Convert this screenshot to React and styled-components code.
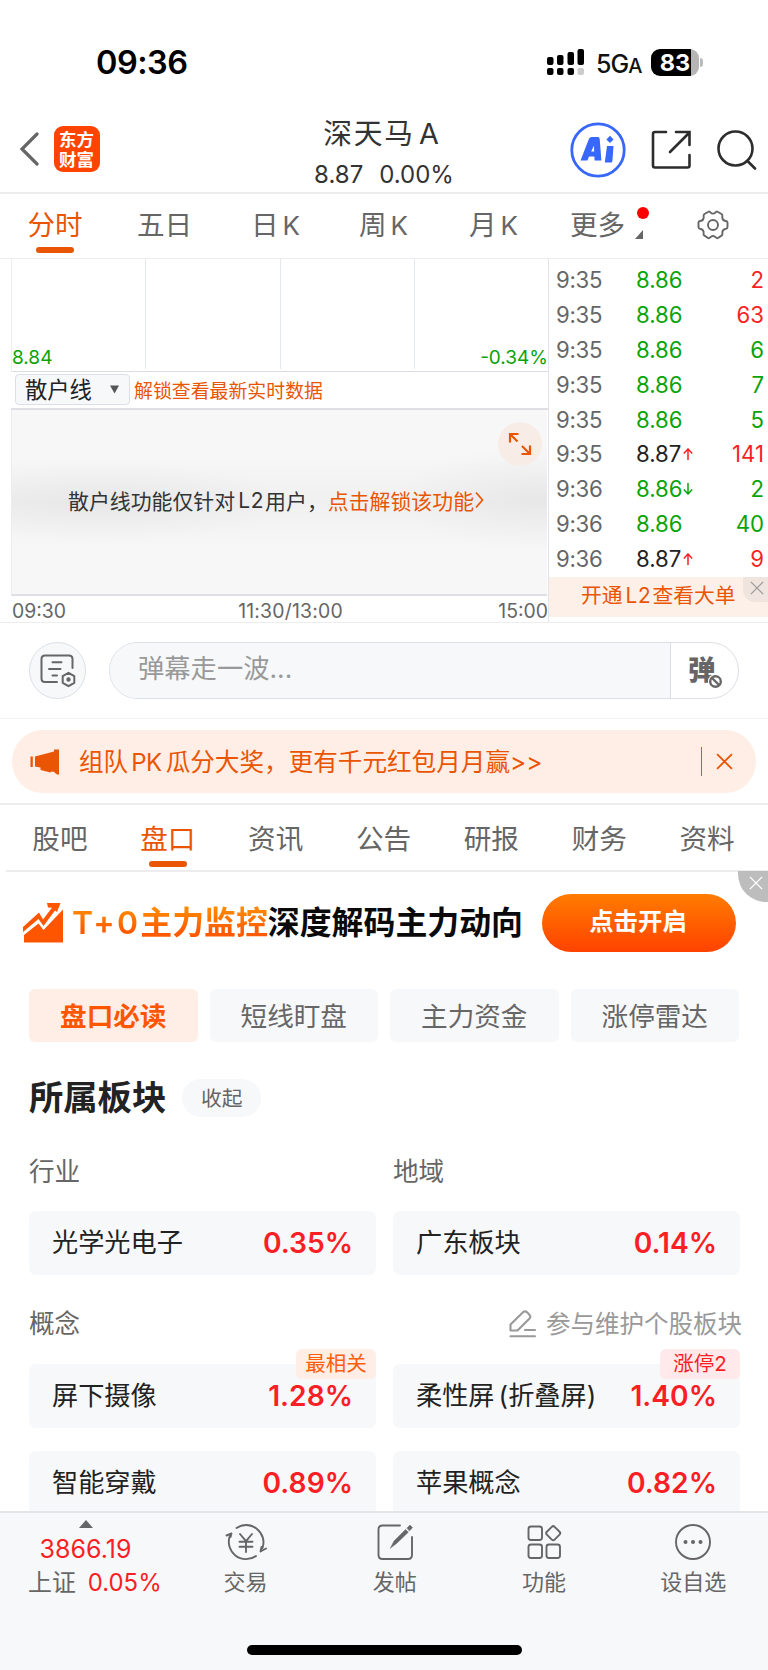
import React from "react";
import styled, { createGlobalStyle, css } from "styled-components";

const orange = "#ea5504";
const red = "#f91f24";
const green = "#0aa30a";
const gray = "#666";
const line = "#ededf0";

export default function App() {
  return (
    <>
      <GlobalStyle />
      <Screen>
        <StatusBar />
        <Header />
        <PeriodTabs />
        <Market>
          <Chart />
          <Ticks />
        </Market>
        <Danmu />
        <Notice />
        <SectionTabs />
        <Promo />
        <Filters />
        <Blocks />
        <BottomNav />
      </Screen>
    </>
  );
}

function StatusBar() {
  return (
    <Status>
      <Clock>09:36</Clock>
      <StatusRight>
        <svg width="38" height="27" viewBox="0 0 38 27">
          <rect x="0" y="8" width="6.5" height="8" rx="2" />
          <rect x="10" y="6" width="6.5" height="10" rx="2" />
          <rect x="20.5" y="3" width="6.5" height="13" rx="2" />
          <rect x="30.5" y="0" width="6.5" height="16" rx="2" />
          <rect x="0" y="19" width="6.5" height="7" rx="2" />
          <rect x="10" y="19" width="6.5" height="7" rx="2" />
          <rect x="20.5" y="19" width="6.5" height="7" rx="2" />
          <rect x="30.5" y="19" width="6.5" height="7" rx="2" fill="#ccc" />
        </svg>
        <Network>
          5G<small>A</small>
        </Network>
        <Battery>83</Battery>
        <BatteryTip />
      </StatusRight>
    </Status>
  );
}

function Header() {
  return (
    <Top>
      <TopSide>
        <svg width="20" height="34" viewBox="0 0 20 34" fill="none" stroke="#666" strokeWidth="3.2">
          <path d="M18 2 L3 17 L18 32" strokeLinecap="round" />
        </svg>
        <Logo>东方财富</Logo>
      </TopSide>
      <TopCenter>
        <StockName>
          深天马<i>A</i>
        </StockName>
        <StockPrice>
          <span>8.87</span>
          <span>0.00%</span>
        </StockPrice>
      </TopCenter>
      <TopActions>
        <svg width="56" height="56" viewBox="0 0 56 56">
          <circle cx="28" cy="28" r="26.2" fill="none" stroke="#3767fb" strokeWidth="2.8" />
          <path
            d="M21.5 15 H28 Q29.5 15 29.7 17 L31.4 38.5 H24.6 L24.4 34.5 H19 L17.4 38.5 H10.5 L19 16.8 Q19.8 15 21.5 15 Z M24 23.5 L21.2 29.6 H24.2 Z"
            fill="#3767fb"
            fillRule="evenodd"
          />
          <path d="M37 24 H43.5 L42.4 39 Q42.2 40.5 41 40.5 H34.8 Z" fill="#3767fb" />
          <path d="M40 13.8 L43.6 17.4 L40 21 L36.4 17.4 Z" fill="#3767fb" />
        </svg>
        <svg width="40" height="40" viewBox="0 0 40 40" fill="none" stroke="#2d2d2d" strokeWidth="2.6" strokeLinecap="round">
          <path d="M15 2 H4 Q2 2 2 4 V35.5 Q2 37.5 4 37.5 H36.5 Q38.5 37.5 38.5 35.5 V25" />
          <path d="M25 2 H38.5 V15 M38 3 L19 22" />
        </svg>
        <svg width="40" height="40" viewBox="0 0 40 40" fill="none" stroke="#2d2d2d" strokeWidth="2.6" strokeLinecap="round">
          <circle cx="18.5" cy="18.5" r="17" />
          <path d="M30.5 31 L38 38.5" />
        </svg>
      </TopActions>
    </Top>
  );
}

const periods = [
  { text: "分时", width: 110, active: true },
  { text: "五日", width: 109 },
  { text: "日", k: true, width: 113 },
  { text: "周", k: true, width: 103 },
  { text: "月", k: true, width: 117 },
];

function PeriodTabs() {
  return (
    <Periods>
      {periods.map((p) => (
        <Period key={p.text} $w={p.width}>
          <TabText $active={p.active}>
            {p.text}
            {p.k && <i>K</i>}
          </TabText>
        </Period>
      ))}
      <MoreTab>
        更多
        <MoreDot />
        <MoreCorner />
      </MoreTab>
      <svg width="32" height="30" viewBox="0 0 32 30" fill="none" stroke="#666" strokeWidth="1.9" strokeLinejoin="round">
        <path d="M11 2 Q12.5 1 13.3 2.3 Q16 5 18.7 2.3 Q19.5 1 21 2 L24.5 4 Q25.7 4.7 25.3 6 Q24.8 10.4 28.8 11 Q30.5 11.3 30.5 12.6 V17 Q30.5 18.4 29 18.7 Q24.8 19.4 25.4 23.8 Q25.6 25 24.5 25.6 L21.4 27.7 Q20 28.7 19 27.5 Q16 24.6 13 27.5 Q12 28.7 10.6 27.7 L7.5 25.6 Q6.4 25 6.6 23.8 Q7.2 19.4 3 18.7 Q1.5 18.4 1.5 17 V12.6 Q1.5 11.3 3.2 11 Q7.2 10.4 6.7 6 Q6.3 4.7 7.5 4 Z" />
        <circle cx="16" cy="15" r="5" />
      </svg>
    </Periods>
  );
}

function Chart() {
  return (
    <ChartCol>
      <Grid>
        <GridCell>
          <span>8.84</span>
        </GridCell>
        <GridCell />
        <GridCell />
        <GridCell $end>
          <span>-0.34%</span>
        </GridCell>
      </Grid>
      <IndicatorBar>
        <Select>
          散户线
          <svg width="9" height="9" viewBox="0 0 9 9">
            <path d="M0 0.5 H9 L4.5 8.5 Z" fill="#555" />
          </svg>
        </Select>
        <UnlockHint>解锁查看最新实时数据</UnlockHint>
      </IndicatorBar>
      <Locked>
        <LockedText>
          散户线功能仅针对<i>L2</i>用户，<b>点击解锁该功能</b>
          <svg width="9" height="18" viewBox="0 0 9 18" fill="none" stroke={orange} strokeWidth="1.7">
            <path d="M1 1.5 L7.5 9 L1 16.5" />
          </svg>
        </LockedText>
        <Expand>
          <svg width="24" height="24" viewBox="0 0 24 24" fill="none" stroke={orange} strokeWidth="2.2">
            <path d="M2 10.5 V2 H10.5 M2.5 2.5 L9.5 9.5 M22 13.5 V22 H13.5 M21.5 21.5 L14 14" />
          </svg>
        </Expand>
      </Locked>
      <Axis>
        <span>09:30</span>
        <span>11:30/13:00</span>
        <span>15:00</span>
      </Axis>
    </ChartCol>
  );
}

const ticks = [
  ["9:35", "8.86", "", "2", "up"],
  ["9:35", "8.86", "", "63", "up"],
  ["9:35", "8.86", "", "6", "down"],
  ["9:35", "8.86", "", "7", "down"],
  ["9:35", "8.86", "", "5", "down"],
  ["9:35", "8.87", "up", "141", "up"],
  ["9:36", "8.86", "down", "2", "down"],
  ["9:36", "8.86", "", "40", "down"],
  ["9:36", "8.87", "up", "9", "up"],
];

function Ticks() {
  return (
    <TickCol>
      <TickList>
        {ticks.map(([time, price, arrow, vol, side], i) => (
          <Tick key={i}>
            <TickTime>{time}</TickTime>
            <TickPrice $flat={price === "8.87"}>{price}</TickPrice>
            <TickArrow>
              {arrow && (
                <svg width="10" height="12" viewBox="0 0 10 12" fill="none" stroke={arrow === "up" ? red : green} strokeWidth="1.5">
                  <path d={arrow === "up" ? "M5 12 V1 M0.8 5.4 L5 1 L9.2 5.4" : "M5 0 V11 M0.8 6.6 L5 11 L9.2 6.6"} />
                </svg>
              )}
            </TickArrow>
            <TickVol $side={side}>{vol}</TickVol>
          </Tick>
        ))}
      </TickList>
      <L2Banner>
        开通<i>L2</i>查看大单
        <L2Close>
          <Cross size={14} color="#999" width={1.5} />
        </L2Close>
      </L2Banner>
    </TickCol>
  );
}

function Cross({ size, color, width }) {
  return (
    <svg width={size} height={size} viewBox="0 0 16 16" fill="none" stroke={color} strokeWidth={width}>
      <path d="M1 1 L15 15 M15 1 L1 15" />
    </svg>
  );
}

function Danmu() {
  return (
    <DanmuRow>
      <RoundButton>
        <svg width="36" height="34" viewBox="0 0 36 34" fill="none" stroke="#666" strokeWidth="2" strokeLinecap="round">
          <path d="M17 28 H5 Q1.5 28 1.5 24.5 V5 Q1.5 1.5 5 1.5 H29 Q32.5 1.5 32.5 5 V14" />
          <path d="M12.5 8.3 H21.5 M9 15 H20.5 M12.5 21.5 H17" />
          <path d="M28.5 18.8 L34.3 22.2 V28.8 L28.5 32.2 L22.7 28.8 V22.2 Z" strokeLinejoin="round" />
          <circle cx="28.5" cy="25.5" r="1.2" fill="#666" />
        </svg>
      </RoundButton>
      <InputBox>
        <Placeholder>弹幕走一波...</Placeholder>
        <DanmuToggle>
          弹
          <svg width="15" height="17" viewBox="0 0 15 17" fill="#fff" stroke="#666" strokeWidth="2.4">
            <circle cx="7.5" cy="8.5" r="7.5" stroke="none" />
            <circle cx="7.5" cy="8.5" r="5.3" />
            <path d="M4 5 L11 12" />
          </svg>
        </DanmuToggle>
      </InputBox>
    </DanmuRow>
  );
}

function Notice() {
  return (
    <NoticeWrap>
      <NoticeBar>
        <svg width="30" height="26" viewBox="0 0 30 26" fill={orange}>
          <path d="M0.5 7.5 H2.8 V18 H0.5 Z M5 7.5 L24 2.5 V0.5 H29 V25.5 H27 L24.5 23.5 V23 L21.5 22.5 L20.5 23.5 L10.5 21 V18.6 L5 17.5 Z" />
        </svg>
        <NoticeText>
          组队<i>PK</i>瓜分大奖，更有千元红包月月赢&gt;&gt;
        </NoticeText>
        <NoticeClose>
          <Cross size={17} color={orange} width={1.7} />
        </NoticeClose>
      </NoticeBar>
    </NoticeWrap>
  );
}

const sections = ["股吧", "盘口", "资讯", "公告", "研报", "财务", "资料"];

function SectionTabs() {
  return (
    <Sections>
      {sections.map((s) => (
        <Section key={s}>
          <TabText $active={s === "盘口"}>{s}</TabText>
        </Section>
      ))}
    </Sections>
  );
}

function Promo() {
  return (
    <PromoRow>
      <svg width="41" height="40" viewBox="0 0 41 40">
        <path d="M0 29 V24 L16 9.5 L20 16.5 L29 4.8 L25 4.5 L24 0 H37.5 L34 9 L32 7.5 L20.5 23 L15.5 16 Z" fill="#fe5500" />
        <path d="M1 32 L15.5 20.5 L20.5 27 L40 6.5 V39.5 H1 Z" fill="#fe5500" />
      </svg>
      <PromoText>
        <em>
          <b>T+0</b>主力监控
        </em>
        深度解码主力动向
      </PromoText>
      <PromoButton>点击开启</PromoButton>
      <PromoClose>
        <Cross size={14} color="#fff" width={1.6} />
      </PromoClose>
    </PromoRow>
  );
}

function Filters() {
  return (
    <FilterRow>
      <Chip $active>盘口必读</Chip>
      <Chip>短线盯盘</Chip>
      <Chip>主力资金</Chip>
      <Chip>涨停雷达</Chip>
    </FilterRow>
  );
}

function Block({ name, rate, tag, limit }) {
  return (
    <Card>
      <CardName>{name}</CardName>
      <CardRate>{rate}</CardRate>
      {tag && <Tag $limit={limit}>{tag}</Tag>}
    </Card>
  );
}

function Blocks() {
  return (
    <BlocksWrap>
      <BlockHead>
        <h2>所属板块</h2>
        <Collapse>收起</Collapse>
      </BlockHead>
      <LabelRow>
        <Label>行业</Label>
        <Label>地域</Label>
      </LabelRow>
      <CardGrid>
        <Block name="光学光电子" rate="0.35%" />
        <Block name="广东板块" rate="0.14%" />
      </CardGrid>
      <LabelRow $concept>
        <Label>概念</Label>
        <EditLink>
          <svg width="28" height="28" viewBox="0 0 28 28" fill="none" stroke="#999" strokeWidth="2.1" strokeLinejoin="round" strokeLinecap="round">
            <path d="M1.5 26.2 H26 M16 20 H26" />
            <path d="M1.5 20.5 V14.5 L14.5 1.8 Q16.5 0.8 18 2.3 L20.5 4.8 Q22 6.6 20.8 8.2 L8.5 20.5 Z" />
          </svg>
          参与维护个股板块
        </EditLink>
      </LabelRow>
      <CardGrid>
        <Block name="屏下摄像" rate="1.28%" tag="最相关" />
        <Block name={<>柔性屏<u>(</u>折叠屏)</>} rate="1.40%" tag="涨停2" limit />
        <Block name="智能穿戴" rate="0.89%" />
        <Block name="苹果概念" rate="0.82%" />
      </CardGrid>
    </BlocksWrap>
  );
}

function BottomNav() {
  return (
    <Nav>
      <NavItems>
        <IndexItem>
          <svg width="14" height="8" viewBox="0 0 14 8">
            <path d="M7 0 L14 8 H0 Z" fill="#666" />
          </svg>
          <IndexValue>3866.19</IndexValue>
          <IndexLine>
            上证<span>0.05%</span>
          </IndexLine>
        </IndexItem>
        <NavItem>
          <NavIcon viewBox="0 0 42 38">
            <path d="M11.5 5 A17.3 17.3 0 0 1 37.5 25 M31 33 A17.3 17.3 0 0 1 5 12.5" />
            <path d="M1.5 12.5 L6.5 10.5 L5.5 14 M36.5 24 L35.5 28.5 L41 25.5" />
            <path d="M15 11 L21 18.2 L27 11 M21 18.2 V29 M14.5 18.8 H27.5 M14.5 23.8 H27.5" />
          </NavIcon>
          交易
        </NavItem>
        <NavItem>
          <NavIcon viewBox="0 0 42 38">
            <path d="M26 2.5 H8.5 Q4.5 2.5 4.5 6.5 V32 Q4.5 36 8.5 36 H34 Q38 36 38 32 V14" />
            <path d="M16.5 25 L20 18 L31.5 6.5 L34.3 9.3 L22.5 20.5 Z M33 5 L36 2 L38.5 4.8 L35.5 7.8 Z" fill="#666" strokeWidth="0.5" />
          </NavIcon>
          发帖
        </NavItem>
        <NavItem>
          <NavIcon viewBox="0 0 42 38">
            <rect x="5.5" y="3.5" width="13.5" height="13.5" rx="2.5" />
            <rect x="5.5" y="21.5" width="13.5" height="13.5" rx="2.5" />
            <rect x="23.5" y="21.5" width="13.5" height="13.5" rx="2.5" />
            <rect x="24.7" y="4.7" width="11" height="11" rx="2" transform="rotate(45 30.2 10.2)" />
          </NavIcon>
          功能
        </NavItem>
        <NavItem>
          <NavIcon viewBox="0 0 42 38">
            <circle cx="21" cy="19" r="17" />
            <g fill="#666" stroke="none">
              <circle cx="13.5" cy="19" r="2" />
              <circle cx="21" cy="19" r="2" />
              <circle cx="28.5" cy="19" r="2" />
            </g>
          </NavIcon>
          设自选
        </NavItem>
      </NavItems>
      <HomeBar />
    </Nav>
  );
}

const GlobalStyle = createGlobalStyle`
  * {
    box-sizing: border-box;
  }
  body {
    margin: 0;
    background: #fff;
    font-family: Inter, "Noto Sans CJK SC", sans-serif;
    color: #222;
  }
  svg {
    display: block;
    flex: none;
  }
  i,
  em {
    font-style: normal;
  }
`;
const Screen = styled.div`
  width: 768px;
  height: 1670px;
  overflow: hidden;
  display: flex;
  flex-direction: column;
  white-space: nowrap;
`;
const Status = styled.div`
  height: 106px;
  padding: 19px 65px 0 96px;
  display: flex;
  align-items: center;
  justify-content: space-between;
  flex: none;
`;
const Clock = styled.div`
  font-size: 32.5px;
  font-weight: 600;
  letter-spacing: -0.5px;
  color: #000;
`;
const StatusRight = styled.div`
  display: flex;
  align-items: center;
`;
const Network = styled.div`
  width: 55px;
  margin: 2px 0 0 11px;
  font-size: 25px;
  font-weight: 500;
  letter-spacing: -1px;
  color: #111;
  small {
    font-size: 20px;
  }
`;
const Battery = styled.div`
  width: 48px;
  height: 27px;
  border-radius: 9px;
  background: linear-gradient(90deg, #000 83%, #b5b5b5 83%);
  color: #fff;
  font-size: 23.5px;
  font-weight: 700;
  line-height: 27px;
  text-align: center;
`;
const BatteryTip = styled.div`
  width: 3px;
  height: 9px;
  margin-left: 1px;
  border-radius: 0 4px 4px 0;
  background: #bbb;
`;
const Top = styled.header`
  height: 88px;
  border-bottom: 2px solid ${line};
  display: flex;
  flex: none;
`;
const TopSide = styled.div`
  width: 250px;
  padding: 0 0 0 19px;
  display: flex;
  align-items: center;
  gap: 15px;
`;
const Logo = styled.div`
  width: 46px;
  height: 46px;
  padding: 3px 5px;
  border-radius: 9px;
  background: #fe4400;
  color: #fff;
  font-family: "Noto Sans CJK SC", sans-serif;
  font-size: 17.5px;
  font-weight: 700;
  line-height: 19.5px;
  white-space: normal;
  word-break: break-all;
`;
const TopCenter = styled.div`
  flex: 1;
  padding-top: 8px;
  display: flex;
  flex-direction: column;
  align-items: center;
`;
const StockName = styled.div`
  height: 40px;
  line-height: 40px;
  margin-left: -6px;
  font-size: 28.8px;
  letter-spacing: 1.8px;
  color: #333;
  i {
    margin-left: 4px;
    letter-spacing: 0;
  }
`;
const StockPrice = styled.div`
  display: flex;
  gap: 16px;
  font-size: 24px;
  line-height: 42px;
  color: #333;
`;
const TopActions = styled.div`
  width: 250px;
  padding: 1px 11px 0 0;
  display: flex;
  align-items: center;
  justify-content: flex-end;
  gap: 26px;
  svg:first-child {
    margin-right: -1px;
  }
`;
const Periods = styled.nav`
  height: 65px;
  padding-bottom: 2px;
  border-bottom: 1px solid ${line};
  display: flex;
  align-items: center;
  flex: none;
`;
const Period = styled.div`
  width: ${(p) => p.$w}px;
  display: flex;
  justify-content: center;
`;
const TabText = styled.div`
  height: 56px;
  line-height: 56px;
  font-size: 27.6px;
  color: ${(p) => (p.$active ? orange : gray)};
  position: relative;
  i {
    margin-left: 4px;
    font-size: 26px;
  }
  ${(p) =>
    p.$active &&
    css`
      &::after {
        content: "";
        position: absolute;
        left: 50%;
        bottom: 0;
        width: 38px;
        height: 6px;
        margin-left: -19px;
        border-radius: 3px;
        background: ${orange};
      }
    `}
`;
const MoreTab = styled.div`
  width: 127px;
  margin-left: 18px;
  font-size: 27.6px;
  line-height: 56px;
  color: ${gray};
  position: relative;
`;
const MoreDot = styled.div`
  position: absolute;
  left: 67px;
  top: 10px;
  width: 12px;
  height: 12px;
  border-radius: 50%;
  background: #fe0000;
`;
const MoreCorner = styled.div`
  position: absolute;
  left: 65px;
  top: 33px;
  border-left: 8px solid transparent;
  border-bottom: 9px solid ${gray};
`;
const Market = styled.section`
  height: 364px;
  border-bottom: 1px solid ${line};
  display: flex;
  flex: none;
`;
const ChartCol = styled.div`
  width: 549px;
  padding-left: 11px;
  border-right: 1px solid #e2e2e8;
`;
const Grid = styled.div`
  height: 113px;
  border-bottom: 1px solid #dcdce4;
  border-left: 1px solid ${line};
  display: flex;
`;
const GridCell = styled.div`
  flex: 1;
  height: 110px;
  border-left: 1px solid #e4e8f0;
  display: flex;
  align-items: flex-end;
  justify-content: ${(p) => (p.$end ? "flex-end" : "flex-start")};
  font-size: 19px;
  line-height: 22px;
  color: ${green};
  &:first-child {
    border-left: 0;
  }
`;
const IndicatorBar = styled.div`
  height: 38px;
  padding: 0 0 1px 4px;
  border-bottom: 2px solid #dfdfe6;
  display: flex;
  align-items: center;
`;
const Select = styled.div`
  width: 115px;
  height: 31px;
  padding: 0 10px 0 9px;
  border: 1px solid #dcdfe6;
  border-radius: 4px;
  background: #f7f8fa;
  font-size: 22.3px;
  line-height: 28px;
  display: flex;
  align-items: center;
  justify-content: space-between;
`;
const UnlockHint = styled.div`
  margin-left: 4px;
  font-size: 18.9px;
  color: ${orange};
`;
const Locked = styled.div`
  height: 186px;
  margin-right: 1px;
  border-left: 1px solid ${line};
  border-bottom: 2px solid #dfdfe6;
  background:
    radial-gradient(ellipse 190px 42px at 17% 50%, rgba(0, 0, 0, 0.04), transparent),
    radial-gradient(ellipse 150px 55px at 100% 48%, rgba(0, 0, 0, 0.04), transparent),
    linear-gradient(#f7f7f8 25%, #f0f0f0 50%, #f7f7f8 75%);
  position: relative;
  display: flex;
  align-items: center;
  padding: 0 0 4px 56px;
`;
const LockedText = styled.div`
  display: flex;
  align-items: center;
  font-size: 20.9px;
  color: #333;
  i {
    margin: 0 1px 0 3px;
    letter-spacing: 0.7px;
  }
  b {
    font-weight: 400;
    color: ${orange};
  }
  svg {
    margin-left: 1px;
  }
`;
const Expand = styled.div`
  position: absolute;
  right: 5px;
  top: 12px;
  width: 44px;
  height: 44px;
  border-radius: 50%;
  background: #f7ece6;
  display: flex;
  align-items: center;
  justify-content: center;
`;
const Axis = styled.div`
  display: grid;
  grid-template-columns: 1fr auto 1fr;
  padding-left: 1px;
  font-size: 19.4px;
  line-height: 30px;
  color: ${gray};
  span:nth-child(2) {
    padding-left: 21px;
    letter-spacing: 0.2px;
  }
  span:last-child {
    text-align: right;
  }
`;
const TickCol = styled.div`
  flex: 1;
  padding-top: 3px;
`;
const TickList = styled.div`
  height: 314px;
  margin-bottom: 1px;
  display: flex;
  flex-direction: column;
`;
const Tick = styled.div`
  flex: 1;
  padding: 0 4px 0 7px;
  display: flex;
  align-items: center;
  font-size: 22.2px;
`;
const TickTime = styled.div`
  width: 80px;
  letter-spacing: -0.3px;
  color: ${gray};
`;
const TickPrice = styled.div`
  width: 45px;
  text-align: right;
  color: ${(p) => (p.$flat ? "#222" : green)};
`;
const TickArrow = styled.div`
  width: 14px;
  padding-left: 2px;
`;
const TickVol = styled.div`
  flex: 1;
  text-align: right;
  color: ${(p) => (p.$side === "up" ? red : green)};
`;
const L2Banner = styled.div`
  height: 40px;
  padding-left: 32px;
  background: #fdf0e9;
  color: ${orange};
  font-size: 20.8px;
  line-height: 38px;
  position: relative;
  i {
    margin: 0 1px 0 3px;
    letter-spacing: 0.7px;
  }
`;
const L2Close = styled.div`
  position: absolute;
  right: 0;
  top: 0;
  width: 25px;
  height: 25px;
  padding: 0 0 3px 3px;
  border-bottom-left-radius: 12px;
  background: #efe4de;
  display: flex;
  align-items: center;
  justify-content: center;
`;
const DanmuRow = styled.div`
  height: 96px;
  padding: 19px 29px;
  border-bottom: 1px solid #f3f3f5;
  display: flex;
  gap: 23px;
  flex: none;
`;
const RoundButton = styled.div`
  width: 57px;
  height: 57px;
  border: 1px solid #dcdfe6;
  border-radius: 50%;
  background: #f7f8fa;
  display: flex;
  align-items: center;
  justify-content: center;
`;
const InputBox = styled.div`
  flex: 1;
  height: 57px;
  border: 1px solid #dcdfe6;
  border-radius: 29px;
  overflow: hidden;
  display: flex;
`;
const Placeholder = styled.div`
  flex: 1;
  padding-left: 28px;
  border-right: 1px solid #dcdfe6;
  background: #f7f8fa;
  color: #999;
  font-size: 26.3px;
  line-height: 52px;
`;
const DanmuToggle = styled.div`
  width: 67px;
  padding-left: 17px;
  color: ${gray};
  font-size: 27.5px;
  font-weight: 900;
  line-height: 54px;
  position: relative;
  svg {
    position: absolute;
    left: 37px;
    top: 30px;
  }
`;
const NoticeWrap = styled.div`
  height: 86px;
  padding: 11px 12px;
  border-bottom: 2px solid ${line};
  flex: none;
`;
const NoticeBar = styled.div`
  height: 63px;
  padding: 0 23px 0 18px;
  border-radius: 31px;
  background: #feeee6;
  display: flex;
  align-items: center;
`;
const NoticeText = styled.div`
  flex: 1;
  margin-left: 19px;
  padding-bottom: 4px;
  font-size: 24.6px;
  color: ${orange};
  i {
    margin: 0 4px 0 3px;
    font-size: 24px;
    letter-spacing: -0.5px;
  }
`;
const NoticeClose = styled.div`
  height: 29px;
  padding-left: 14px;
  border-left: 1px solid ${orange};
  display: flex;
  align-items: center;
`;
const Sections = styled.nav`
  height: 67px;
  margin-left: 6px;
  padding: 5px 7px 0 0;
  border-bottom: 2px solid ${line};
  display: flex;
  flex: none;
`;
const Section = styled.div`
  width: 107.9px;
  display: flex;
  justify-content: center;
  ${TabText} {
    height: 57px;
    line-height: 58px;
  }
`;
const PromoRow = styled.div`
  height: 101px;
  padding: 0 32px 0 23px;
  display: flex;
  align-items: center;
  position: relative;
  flex: none;
`;
const PromoText = styled.div`
  flex: 1;
  margin-left: 8px;
  padding-bottom: 6px;
  font-family: "Noto Sans CJK SC", sans-serif;
  font-size: 31.9px;
  font-weight: 700;
  color: #0a0a0a;
  em {
    background: linear-gradient(#ff8a00 25%, #ff5a00 75%);
    background-clip: text;
    color: transparent;
  }
  b {
    font-family: Inter, sans-serif;
    font-weight: 600;
    letter-spacing: 2.2px;
  }
`;
const PromoButton = styled.button`
  width: 194px;
  height: 58px;
  padding: 0 2px 6px 0;
  border: 0;
  border-radius: 29px;
  background: linear-gradient(#ff7c00, #ff4200);
  color: #fff;
  font-family: "Noto Sans CJK SC", sans-serif;
  font-size: 24.4px;
  font-weight: 700;
`;
const PromoClose = styled.div`
  position: absolute;
  right: 0;
  top: -1px;
  width: 30px;
  height: 31px;
  padding: 0 0 8px 6px;
  border-bottom-left-radius: 28px;
  background: #bdbdbd;
  display: flex;
  align-items: center;
  justify-content: center;
`;
const FilterRow = styled.div`
  padding: 16px 29px 0;
  display: grid;
  grid-template-columns: repeat(4, 1fr);
  gap: 12px;
  flex: none;
`;
const Chip = styled.div`
  height: 53px;
  border-radius: 6px;
  background: ${(p) => (p.$active ? "#ffeee6" : "#f7f8fa")};
  color: ${(p) => (p.$active ? "#fe5500" : gray)};
  font-size: 26.6px;
  font-weight: ${(p) => (p.$active ? 700 : 400)};
  line-height: 55px;
  text-align: center;
`;
const BlocksWrap = styled.section`
  flex: 1;
  min-height: 0;
  overflow: hidden;
  padding: 30px 28px 0 29px;
`;
const BlockHead = styled.div`
  height: 52px;
  display: flex;
  align-items: center;
  gap: 16px;
  h2 {
    margin: 0;
    font-size: 34.3px;
    font-weight: 600;
    line-height: 52px;
  }
`;
const Collapse = styled.div`
  width: 79px;
  height: 38px;
  border-radius: 19px;
  background: #f7f8fa;
  color: ${gray};
  font-size: 20.8px;
  line-height: 39px;
  text-align: center;
`;
const LabelRow = styled.div`
  height: ${(p) => (p.$concept ? 89 : 87)}px;
  padding-top: ${(p) => (p.$concept ? 31 : 30)}px;
  display: grid;
  grid-template-columns: 347px 347px;
  gap: 17px;
  line-height: 36px;
`;
const Label = styled.div`
  font-size: 25.6px;
  color: ${gray};
`;
const EditLink = styled.div`
  height: 36px;
  margin-right: -2px;
  display: flex;
  align-items: center;
  justify-content: flex-end;
  gap: 9px;
  font-size: 24.5px;
  color: #999;
`;
const CardGrid = styled.div`
  display: grid;
  grid-template-columns: 347px 347px;
  gap: 23px 17px;
`;
const Card = styled.div`
  height: 64px;
  padding: 0 23px;
  border-radius: 7px;
  background: #f7f8fa;
  display: flex;
  align-items: center;
  justify-content: space-between;
  position: relative;
`;
const CardName = styled.div`
  font-size: 26.2px;
  line-height: 36px;
  color: #222;
  u {
    margin-left: 4px;
    text-decoration: none;
  }
`;
const CardRate = styled.div`
  font-size: 28.2px;
  font-weight: 600;
  line-height: 36px;
  color: ${red};
`;
const Tag = styled.div`
  position: absolute;
  right: 0;
  top: -15px;
  width: 80px;
  height: 30px;
  border-radius: 6px;
  background: ${(p) => (p.$limit ? "#ffe9ea" : "#ffeee6")};
  color: ${(p) => (p.$limit ? red : "#fe5d0c")};
  font-size: 20.5px;
  line-height: 30px;
  text-align: center;
`;
const Nav = styled.footer`
  height: 159px;
  border-top: 2px solid #e3e4e8;
  background: #f7f8fa;
  flex: none;
`;
const NavItems = styled.div`
  height: 91px;
  display: flex;
`;
const IndexItem = styled.div`
  width: 171px;
  padding-top: 7px;
  display: flex;
  flex-direction: column;
  align-items: center;
`;
const IndexValue = styled.div`
  height: 34px;
  margin-top: 4px;
  line-height: 34px;
  color: ${red};
  font-size: 25px;
`;
const IndexLine = styled.div`
  width: 171px;
  padding-left: 28px;
  line-height: 34px;
  font-size: 23.9px;
  color: ${gray};
  span {
    margin-left: 12px;
    color: ${red};
  }
`;
const NavItem = styled.div`
  flex: 1;
  padding-top: 10px;
  display: flex;
  flex-direction: column;
  align-items: center;
  gap: 4px;
  font-size: 22px;
  line-height: 34px;
  color: ${gray};
`;
const NavIcon = styled.svg`
  width: 42px;
  height: 38px;
  fill: none;
  stroke: #666;
  stroke-width: 1.9;
  stroke-linecap: round;
  stroke-linejoin: round;
`;
const HomeBar = styled.div`
  width: 275px;
  height: 10px;
  margin: 41px auto 0;
  border-radius: 5px;
  background: #000;
`;
